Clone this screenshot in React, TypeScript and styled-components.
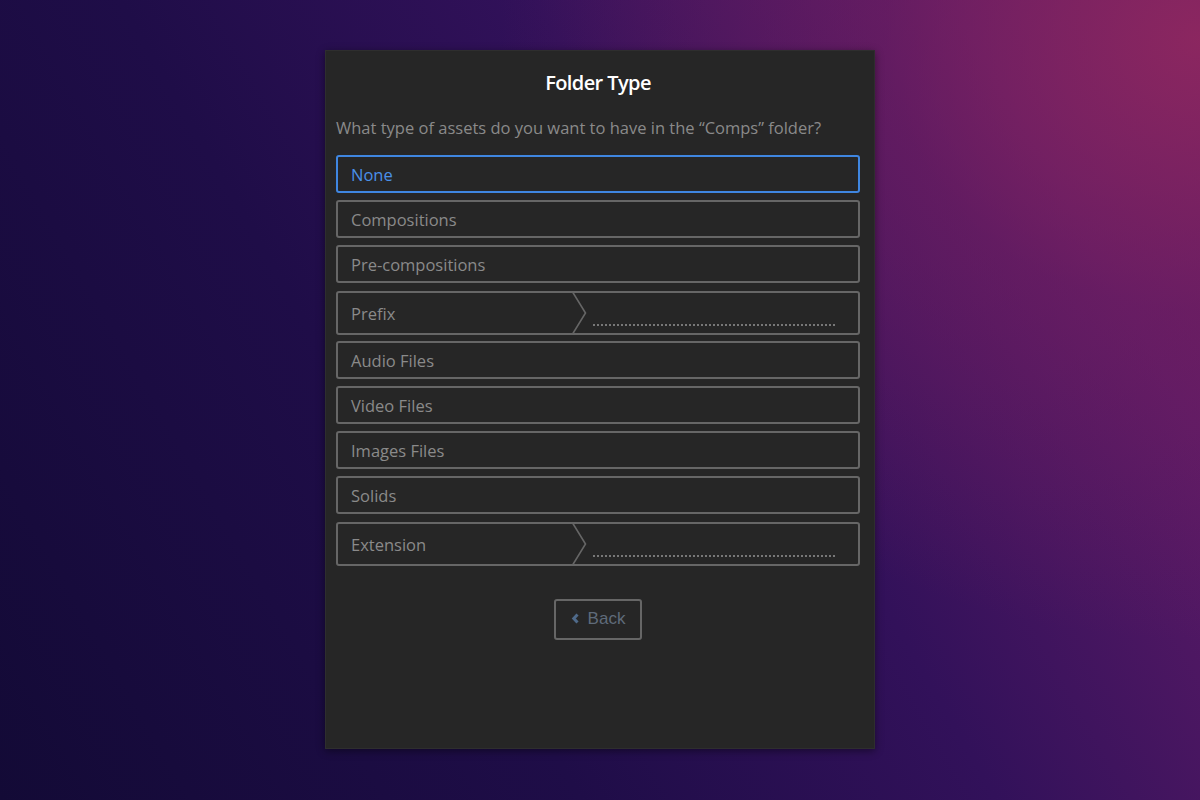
import React from "react";
import styled, { createGlobalStyle } from "styled-components";

const Global = createGlobalStyle`
  html, body { margin: 0; padding: 0; }
  body {
    width: 1200px;
    height: 800px;
    overflow: hidden;
    font-family: "Open Sans", "Noto Sans", sans-serif;
    background:
      radial-gradient(ellipse 700px 600px at 100% 5%, rgba(145, 40, 95, 0.85) 0%, rgba(120, 32, 95, 0.45) 45%, rgba(80, 20, 90, 0) 100%),
      linear-gradient(60deg, #130a36 0%, #1f0d48 35%, #32115a 60%, #5a1a66 85%, #6a1e64 100%);
  }
`;

const Page = styled.div`
  width: 1200px;
  height: 800px;
  display: flex;
  justify-content: center;
  padding-top: 50px;
  box-sizing: border-box;
`;

const Panel = styled.div`
  width: 550px;
  height: 699px;
  box-sizing: border-box;
  background: #262626;
  border: 1px solid #2e2e2e;
  box-shadow: 0 2px 8px rgba(0, 0, 0, 0.45);
  padding: 18px 14px 0 10px;
  display: flex;
  flex-direction: column;
`;

const Title = styled.h1`
  margin: 0;
  text-align: center;
  color: #ffffff;
  font-family: "Open Sans", sans-serif;
  font-weight: 600;
  font-size: 20px;
  line-height: 28px;
  letter-spacing: -0.6px;
`;

const Question = styled.p`
  margin: 20px 0 0 0;
  color: #8a8a8a;
  font-size: 16.5px;
  line-height: 22px;
`;

const List = styled.div`
  margin-top: 16px;
  display: flex;
  flex-direction: column;
  gap: 7px;
`;

const Option = styled.div<{ $active?: boolean }>`
  height: 38px;
  box-sizing: border-box;
  border: 2px solid ${(p) => (p.$active ? "#3f86e0" : "#666666")};
  border-radius: 3px;
  color: ${(p) => (p.$active ? "#4a90e8" : "#8a8a8a")};
  font-size: 16.5px;
  display: flex;
  align-items: center;
  padding-left: 13px;
`;

const InputRow = styled.div`
  height: 44px;
  box-sizing: border-box;
  border: 2px solid #666666;
  border-radius: 3px;
  display: flex;
  align-items: stretch;
  margin-top: 1px;
  margin-bottom: -1px;
`;

const InputLabel = styled.div`
  flex: 0 0 220px;
  padding-left: 13px;
  display: flex;
  align-items: center;
  color: #8a8a8a;
  font-size: 16.5px;
`;

const Chevron = styled.svg`
  flex: 0 0 16px;
  height: 44px;
  margin-top: -2px;
  margin-bottom: -2px;
`;

const InputField = styled.div`
  flex: 1;
  display: flex;
  align-items: flex-end;
  padding: 0 23px 7px 6px;
`;

const Dotted = styled.div`
  width: 100%;
  height: 0;
  border-bottom: 2px dotted #777777;
`;

const Footer = styled.div`
  display: flex;
  justify-content: center;
  margin-top: 34px;
`;

const BackButton = styled.button`
  width: 88px;
  height: 41px;
  box-sizing: border-box;
  background: transparent;
  border: 2px solid #666666;
  border-radius: 3px;
  color: #5f6b7a;
  font-family: "Liberation Sans", Arial, sans-serif;
  font-size: 17px;
  display: flex;
  align-items: center;
  justify-content: center;
  gap: 8px;
  padding: 0 0 2px 0;
`;

const ChevronRow = () => (
  <Chevron viewBox="0 0 16 44" preserveAspectRatio="none">
    <polyline points="1,0 14.5,22 1,44" fill="none" stroke="#666666" strokeWidth="1.6" />
  </Chevron>
);

const InputOption = ({ label }: { label: string }) => (
  <InputRow>
    <InputLabel>{label}</InputLabel>
    <ChevronRow />
    <InputField>
      <Dotted />
    </InputField>
  </InputRow>
);

export default function App() {
  return (
    <>
      <Global />
      <Page>
        <Panel>
          <Title>Folder Type</Title>
          <Question>What type of assets do you want to have in the “Comps” folder?</Question>
          <List>
            <Option $active>None</Option>
            <Option>Compositions</Option>
            <Option>Pre-compositions</Option>
            <InputOption label="Prefix" />
            <Option>Audio Files</Option>
            <Option>Video Files</Option>
            <Option>Images Files</Option>
            <Option>Solids</Option>
            <InputOption label="Extension" />
          </List>
          <Footer>
            <BackButton>
              <svg width="9" height="11" viewBox="0 0 9 11">
                <polyline points="6.5,1.5 2.8,5.5 6.5,9.5" fill="none" stroke="#4f6a8a" strokeWidth="3" />
              </svg>
              Back
            </BackButton>
          </Footer>
        </Panel>
      </Page>
    </>
  );
}
